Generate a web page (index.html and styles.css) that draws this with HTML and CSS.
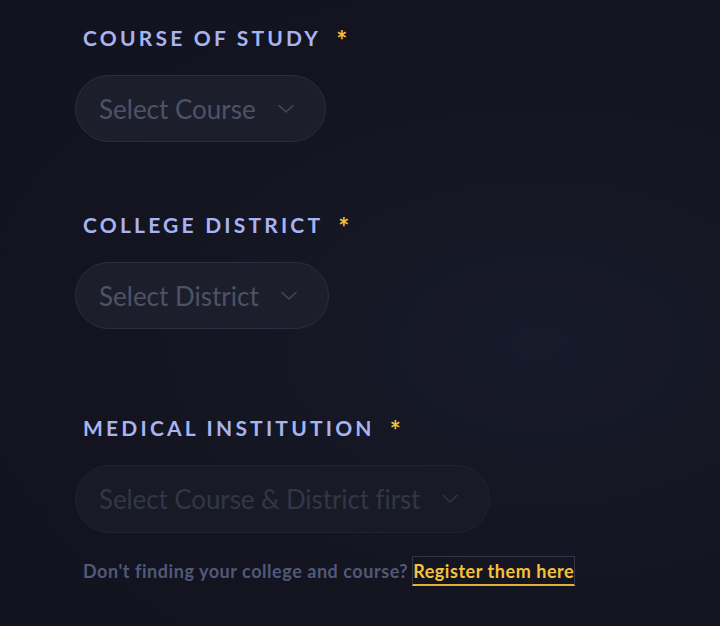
FILE: index.html
```html
<!DOCTYPE html>
<html>
<head>
<meta charset="utf-8">
<link rel="stylesheet" href="styles.css">
</head>
<body>
<div class="form">
  <div class="field">
    <label class="label">COURSE OF STUDY<span class="req">*</span></label>
    <div class="select"><span class="ph">Select Course</span><svg class="chev" viewBox="0 0 16 10" width="16" height="10"><path d="M1 1.5 L8 8 L15 1.5" fill="none" stroke="currentColor" stroke-width="1.6" stroke-linecap="round" stroke-linejoin="round"/></svg></div>
  </div>
  <div class="field">
    <label class="label">COLLEGE DISTRICT<span class="req">*</span></label>
    <div class="select"><span class="ph">Select District</span><svg class="chev" viewBox="0 0 16 10" width="16" height="10"><path d="M1 1.5 L8 8 L15 1.5" fill="none" stroke="currentColor" stroke-width="1.6" stroke-linecap="round" stroke-linejoin="round"/></svg></div>
  </div>
  <div class="field last">
    <label class="label">MEDICAL INSTITUTION<span class="req">*</span></label>
    <div class="select disabled"><span class="ph">Select Course &amp; District first</span><svg class="chev" viewBox="0 0 16 10" width="16" height="10"><path d="M1 1.5 L8 8 L15 1.5" fill="none" stroke="currentColor" stroke-width="1.6" stroke-linecap="round" stroke-linejoin="round"/></svg></div>
    <p class="help">Don't finding your college and course? <a class="link" href="#">Register them here</a></p>
  </div>
</div>
</body>
</html>
```
FILE: styles.css
```css
html, body {
  margin: 0;
  height: 100%;
}
body {
  background: radial-gradient(ellipse at 75% 55%, #171a2a 0%, #13141f 60%, #121320 100%);
  font-family: "Lato", "Noto Sans", sans-serif;
  overflow: hidden;
}
.form {
  padding: 27px 0 0 75px;
  display: flex;
  flex-direction: column;
}
.field {
  display: flex;
  flex-direction: column;
  align-items: flex-start;
  margin-bottom: 72px;
}
.field:nth-child(2) {
  margin-bottom: 88px;
}
.field.last {
  margin-bottom: 0;
}
.label {
  margin-left: 8px;
  font-size: 21px;
  font-weight: 700;
  letter-spacing: 3.2px;
  color: #a8b3f0;
  line-height: 22px;
  margin-bottom: 24px;
  display: flex;
  align-items: flex-start;
}
.req {
  color: #f5bf3c;
  margin-left: 15px;
  margin-top: 2px;
  font-size: 26px;
  line-height: 22px;
  font-weight: 700;
  letter-spacing: 0;
}
.select {
  box-sizing: border-box;
  height: 67px;
  display: flex;
  align-items: center;
  gap: 22px;
  padding: 0 31px 0 23px;
  border: 1px solid #2b2e40;
  border-radius: 34px;
  background: #1c1e2c;
  color: #4f5266;
}
.ph {
  font-size: 26px;
  font-weight: 400;
  letter-spacing: 0;
}
.chev {
  color: #44475a;
  width: 16px;
  height: 10px;
}
.select.disabled {
  height: 68px;
  background: #181a26;
  border-color: #202232;
  color: #333646;
}
.select.disabled .ph {
  letter-spacing: -0.1px;
}
.select.disabled .chev {
  color: #303343;
}
.help {
  margin: 23px 0 0 8px;
  font-size: 18px;
  font-weight: 700;
  letter-spacing: 0.55px;
  color: #525878;
}
.link {
  display: inline-block;
  color: #f7c23a;
  text-decoration: none;
  border: 1px solid #34364a;
  border-bottom: 2px solid #e0b23c;
  padding: 3px 0 2px 0;
  margin-left: -1px;
}
```
